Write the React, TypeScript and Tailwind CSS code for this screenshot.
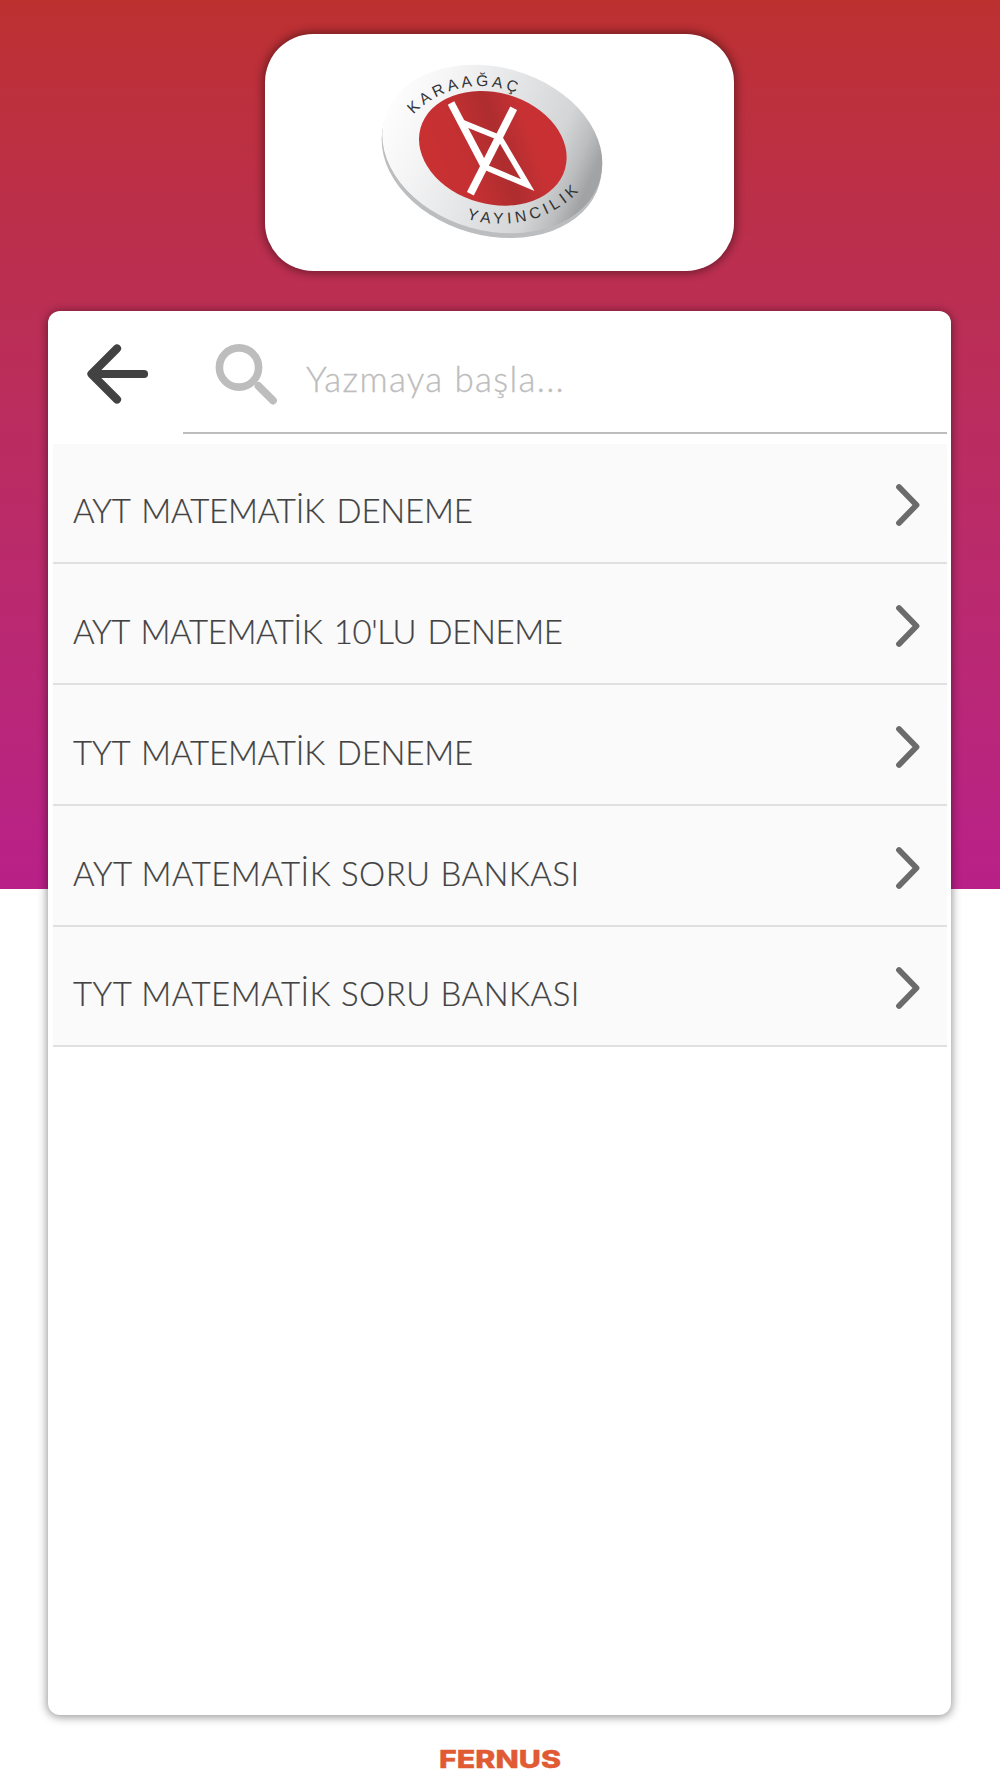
/**
 * Book picker — publisher logo on top, a search field and the list of titles
 * in one tall panel underneath.
 */

interface Book {
  title: string;
  spacing: string;
}

const BOOKS: Book[] = [
  { title: "AYT MATEMATİK DENEME", spacing: "tracking-[-0.22px] [word-spacing:3px]" },
  { title: "AYT MATEMATİK 10'LU DENEME", spacing: "tracking-[-0.42px] [word-spacing:3px]" },
  { title: "TYT MATEMATİK DENEME", spacing: "tracking-[-0.18px] [word-spacing:3px]" },
  { title: "AYT MATEMATİK SORU BANKASI", spacing: "tracking-[0.45px] [word-spacing:0.5px]" },
  { title: "TYT MATEMATİK SORU BANKASI", spacing: "tracking-[0.48px] [word-spacing:0.5px]" },
];

function PublisherLogo() {
  return (
    <svg viewBox="0 0 780 600" className="h-[200px] w-[260px]">
      <defs>
        <linearGradient id="rim" x1="0" y1="0" x2="1" y2="0.1">
          <stop offset="0" stopColor="#ffffff" />
          <stop offset="0.22" stopColor="#f6f6f7" />
          <stop offset="0.55" stopColor="#e3e4e5" />
          <stop offset="0.8" stopColor="#d4d5d6" />
          <stop offset="0.92" stopColor="#bcbdbe" />
          <stop offset="1" stopColor="#a2a3a5" />
        </linearGradient>
        <linearGradient id="core" x1="0.1" y1="0.7" x2="0.9" y2="0.3">
          <stop offset="0" stopColor="#c93032" />
          <stop offset="0.25" stopColor="#c53032" />
          <stop offset="0.56" stopColor="#ae2d2f" />
          <stop offset="0.82" stopColor="#c83134" />
          <stop offset="1" stopColor="#c83033" />
        </linearGradient>
        <path id="arc-top" d="M160 194 C 213 136, 330 74, 474 131" />
        <path id="arc-bottom" d="M320 506 C 430 540, 570 520, 664 416" />
      </defs>
      <ellipse cx="395" cy="311" rx="336" ry="245" fill="#bbbdbf" transform="rotate(15.9 395 311)" />
      <ellipse cx="397" cy="297" rx="336" ry="245" fill="url(#rim)" transform="rotate(15.9 397 297)" />
      <ellipse cx="398.5" cy="295" rx="225.3" ry="167" fill="url(#core)" transform="rotate(15.9 398.5 295)" />
      <g fill="none" stroke="#fff">
        <path d="M273 159 L377 357" strokeWidth="22" />
        <path d="M461 175 L331 431" strokeWidth="23" />
        <path d="M306 217 L419 263 L503 405 L372 350" strokeWidth="17" strokeMiterlimit="10" />
      </g>
      <g fill="#333" fontFamily="'Liberation Sans', Arial, sans-serif" fontSize="47">
        <text textLength="334">
          <textPath href="#arc-top" textLength="334">KARAAĞAÇ</textPath>
        </text>
        <text textLength="363">
          <textPath href="#arc-bottom" textLength="363">YAYINCILIK</textPath>
        </text>
      </g>
    </svg>
  );
}

function BackArrow() {
  return (
    <svg viewBox="0 0 64 64" className="mt-[31px] ml-[32px] size-16 shrink-0" fill="none" stroke="#424242" strokeWidth="8.2" strokeLinecap="round" strokeLinejoin="round">
      <path d="M32 6.5 L6.5 32 L32 57.5 M8 32 H59" />
    </svg>
  );
}

function SearchIcon() {
  return (
    <svg viewBox="0 0 64 64" className="mt-[31px] ml-[30px] size-16 shrink-0" fill="none" stroke="#bdbdbd" strokeLinecap="round">
      <circle cx="26" cy="25.5" r="19.6" strokeWidth="7.6" />
      <path d="M45.5 44 L60 58.5" strokeWidth="7.8" />
    </svg>
  );
}

function Chevron() {
  return (
    <svg viewBox="0 0 28 46" className="mt-[5px] mr-[25px] h-[46px] w-7" fill="none" stroke="#6b6b6b" strokeWidth="5.8" strokeLinecap="round" strokeLinejoin="round">
      <path d="M5 5 L22.5 23 L5 41" />
    </svg>
  );
}

function BookRow({ book }: { book: Book }) {
  return (
    <li className="flex h-[120.75px] items-center justify-between border-b-2 border-[#e0e0e0] bg-[#fafafa] pl-5">
      <span className={`mt-[15px] text-[33px] leading-10 font-light whitespace-nowrap text-[#424242] [-webkit-text-stroke:0.2px] ${book.spacing}`}>{book.title}</span>
      <Chevron />
    </li>
  );
}

export default function App() {
  return (
    <div className="flex h-[1778px] w-[1000px] flex-col items-center overflow-hidden bg-white bg-linear-to-b from-[#bd3030] to-[#b92088] bg-[length:100%_889px] bg-no-repeat pr-px font-['Lato',sans-serif]">
      <header className="mt-[34px] mr-px flex h-[237px] w-[469px] shrink-0 items-start justify-center rounded-[48px] bg-white pt-4 pr-[18px] shadow-[0_0_10px_2px_rgba(0,0,0,0.42)]">
        <PublisherLogo />
      </header>

      <main className="mt-10 h-[1404px] w-[903px] shrink-0 rounded-xl bg-white pr-1 pl-[5px] shadow-[0_1px_10px_1px_rgba(0,0,0,0.42)]">
        <div className="flex h-[132.5px]">
          <BackArrow />
          <div className="ml-[34px] flex h-[123px] flex-1 border-b-2 border-[#bdbdbd]">
            <SearchIcon />
            <input
              className="mt-[43px] ml-[29px] h-12 w-96 text-[35px] font-light tracking-[1.3px] outline-none [-webkit-text-stroke:0.3px_#bdbdbd] placeholder:text-[#bdbdbd]"
              placeholder="Yazmaya başla..."
            />
          </div>
        </div>
        <ul>
          {BOOKS.map((b) => (
            <BookRow key={b.title} book={b} />
          ))}
        </ul>
      </main>

      <footer className="mt-[26px]">
        <svg viewBox="0 0 132 34" className="h-[34px] w-[132px]">
          <text x="5" y="27" fill="#e05a33" stroke="#e05a33" strokeWidth="0.4" fontFamily="Inter, sans-serif" fontWeight="800" fontSize="24.5" textLength="122" lengthAdjust="spacingAndGlyphs">
            FERNUS
          </text>
        </svg>
      </footer>
    </div>
  );
}
